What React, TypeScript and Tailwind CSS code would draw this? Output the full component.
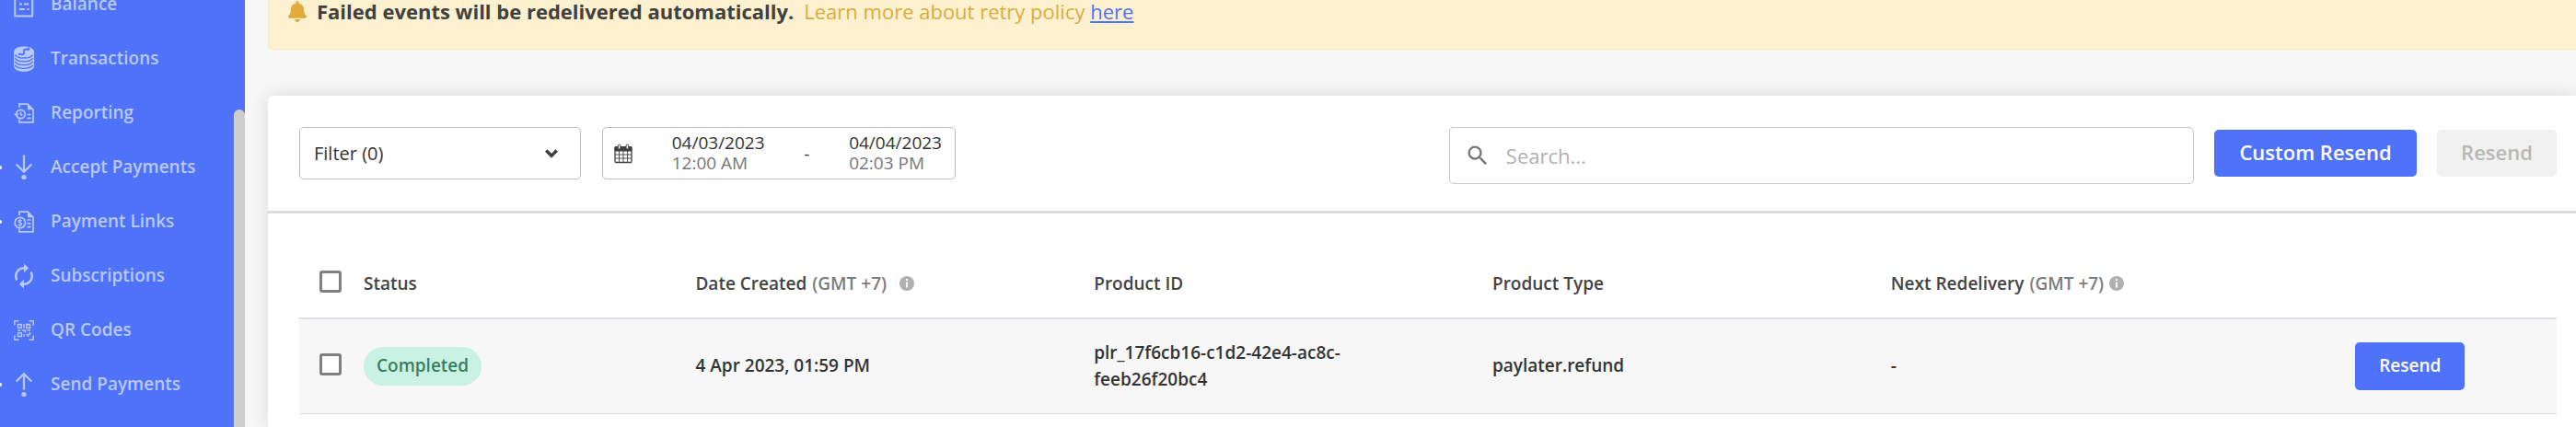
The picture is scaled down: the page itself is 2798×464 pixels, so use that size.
import type { ReactNode } from 'react';
import { FaBell } from 'react-icons/fa';
import { MdAutorenew, MdSearch } from 'react-icons/md';

interface NavItem {
  label: string;
  icon: ReactNode;
  hasSubmenu?: boolean;
}

interface WebhookEvent {
  id: string;
  status: string;
  createdAt: string;
  productId: string;
  productType: string;
  nextRedelivery: string;
}

const BalanceIcon = () => (
  <svg width="22" height="28" viewBox="0 0 22 28" fill="none" stroke="currentColor" strokeWidth="2">
    <rect x="1.2" y="1" width="19" height="25.5" />
    <path d="M6 8h10M6 13.5h3M11 13.5h5M6 19h6M14.5 19h2" />
  </svg>
);

const CoinsIcon = () => (
  <svg width="22" height="28" viewBox="0 0 22 28">
    <path
      d="M0 6.5C0 2.5 5 .5 11 .5s11 2 11 6v15c0 4-5 6.300-11 6.300s-11-2.300-11-6.300z"
      fill="currentColor"
    />
    <g fill="none" stroke="#4f73f8" strokeWidth="1.300">
      <path d="M1.200 9.300c2 3 6 3.700 9.800 3.700s7.800-.7 9.800-3.700" />
      <path d="M1.200 13.100c2 3 6 3.700 9.800 3.700s7.800-.7 9.800-3.700" />
      <path d="M1.200 16.900c2 3 6 3.700 9.800 3.700s7.800-.7 9.800-3.700" />
      <path d="M1.200 20.700c2 3 6 3.700 9.800 3.700s7.800-.7 9.800-3.700" />
      <path d="M16.500 4.300c-2.500-1.300-6-.9-5.600.9.300 1.200 1.200 3.500-1.400 4-1.500.3-2.700-.2-3.500-1M15 3l2.200-.5M5 9.200l2-.8" strokeWidth="1.900" />
    </g>
  </svg>
);

const ReportIcon = () => (
  <svg width="22" height="22" viewBox="0 0 22 22" fill="none" stroke="currentColor" strokeWidth="1.700">
    <path d="M6 4.500V1.200h9l6 5.800v13.800H6v-3.300" />
    <path d="M15 1l6.300 6.200H15z" fill="currentColor" stroke="none" />
    <circle cx="7.500" cy="12" r="4.700" />
    <path d="M7.500 9.500v2.700l2 1.300M14.500 12.500h4M14.500 16.300h4" />
    <path d="M0 11.500h5.600l-2.800 3.200z" fill="currentColor" stroke="none" />
  </svg>
);

const PaymentLinkIcon = () => (
  <svg width="22" height="24" viewBox="0 0 22 24" fill="none" stroke="currentColor" strokeWidth="1.700">
    <path d="M6 5V1.200h9l6 5.800v15.800H6v-3.300" />
    <path d="M15 1l6.300 6.200H15z" fill="currentColor" stroke="none" />
    <circle cx="6.800" cy="13" r="5.700" />
    <path d="M8.800 11c-1.200-1.200-3.800-.9-3.800.5 0 1.800 3.800 1.100 3.800 3 0 1.500-2.700 1.700-4 .5M6.900 9v8" strokeWidth="1.100" />
    <path d="M14.500 10h4M14.500 13.800h4M14.500 17.600h4" />
  </svg>
);

const QrIcon = () => (
  <svg width="22" height="22" viewBox="0 0 22 22" fill="none" stroke="currentColor" strokeWidth="1.500">
    <path d="M.8 5.500V.8h4.700M16.500.8h4.700v4.700M21.200 16.500v4.700h-4.700M5.500 21.200H.8v-4.700" />
    <rect x="4.500" y="4.500" width="3.800" height="3.800" />
    <rect x="13.700" y="4.500" width="3.800" height="3.800" />
    <rect x="4.500" y="13.700" width="3.800" height="3.800" />
    <path d="M11 4v4.500M4 11h3.500M9 11h3.500v2.500M14.500 10.800h3.500M11 15v3M13.500 15.500h2v2.500M17.500 13v3" />
  </svg>
);

const ArrowDownIcon = () => (
  <svg width="20" height="28" viewBox="0 0 20 28" fill="none" stroke="currentColor" strokeWidth="2.200">
    <path d="M10 .5v18M1.700 10.500l8.300 8.300 8.300-8.300" />
    <circle cx="10" cy="24.500" r="2.600" fill="currentColor" stroke="none" />
  </svg>
);

const ArrowUpIcon = () => (
  <svg width="20" height="28" viewBox="0 0 20 28" fill="none" stroke="currentColor" strokeWidth="2.200">
    <path d="M10 19.500V2.500M1.700 10.500L10 2.200l8.300 8.300" />
    <circle cx="10" cy="24.500" r="2.600" fill="currentColor" stroke="none" />
  </svg>
);

const CalendarIcon = () => (
  <svg width="20" height="22" viewBox="0 0 20 22" fill="none" stroke="#404040">
    <rect x="1" y="4.500" width="18" height="16" rx="1" strokeWidth="1.300" />
    <path d="M1 3.500h18V8H1z" fill="#404040" />
    <path d="M5.500 8v12.500M10 8v12.500M14.500 8v12.500M1 12h18M1 16h18" strokeWidth=".9" />
    <rect x="4.300" y="1" width="2.600" height="5" rx="1.300" fill="#fff" />
    <rect x="13.100" y="1" width="2.600" height="5" rx="1.300" fill="#fff" />
  </svg>
);

const InfoIcon = () => (
  <svg width="16" height="16" viewBox="0 0 16 16">
    <circle cx="8" cy="8" r="8" fill="#b0b0b0" />
    <path d="M8 3v2M8 6.500v6" stroke="#fff" strokeWidth="1.800" />
  </svg>
);

const navItems: NavItem[] = [
  { label: 'Balance', icon: <BalanceIcon /> },
  { label: 'Transactions', icon: <CoinsIcon /> },
  { label: 'Reporting', icon: <ReportIcon /> },
  { label: 'Accept Payments', icon: <ArrowDownIcon />, hasSubmenu: true },
  { label: 'Payment Links', icon: <PaymentLinkIcon />, hasSubmenu: true },
  { label: 'Subscriptions', icon: <MdAutorenew className="size-[30px] shrink-0" /> },
  { label: 'QR Codes', icon: <QrIcon /> },
  { label: 'Send Payments', icon: <ArrowUpIcon />, hasSubmenu: true },
];

const events: WebhookEvent[] = [
  {
    id: '1',
    status: 'Completed',
    createdAt: '4 Apr 2023, 01:59 PM',
    productId: 'plr_17f6cb16-c1d2-42e4-ac8c-feeb26f20bc4',
    productType: 'paylater.refund',
    nextRedelivery: '-',
  },
];

const Checkbox = ({ label }: { label: string }) => (
  <input
    type="checkbox"
    aria-label={label}
    className="block size-6 appearance-none rounded-[3px] border-3 border-[#808080] bg-white checked:bg-[#4f73f8]"
  />
);

const Sidebar = () => (
  <nav className="relative w-[266px] shrink-0 overflow-hidden bg-[#4f73f8]">
    <ul className="-mt-[25px]">
      {navItems.map((item) => (
        <li key={item.label} className="relative">
          {item.hasSubmenu && (
            <span className="absolute top-7 left-0 h-1 w-0.5 rounded-r-full bg-white" />
          )}
          <a
            href="#"
            className="flex h-[59px] items-center gap-[17px] pl-[14px] text-[19px] font-semibold text-[#b9c8fd]"
          >
            <span className="flex w-6 shrink-0 justify-center">{item.icon}</span>
            {item.label}
          </a>
        </li>
      ))}
    </ul>
    {/* Scrollbar thumb */}
    <div className="absolute top-[119px] right-0 bottom-0 w-3 rounded-t-full bg-[#cecece]" />
  </nav>
);

const Toolbar = () => (
  <div className="flex items-start border-b-3 border-[#dcdcdc] pt-[34px] pr-[21px] pb-[29px] pl-[34px]">
    <button
      type="button"
      className="flex h-[57px] w-[306px] items-center justify-between rounded-[5px] border border-[#bdbdbd] pr-6 pl-[15px] text-[20px] text-[#333]"
    >
      Filter (0)
      <svg width="14" height="10" viewBox="0 0 14 10" fill="none" stroke="#404040" strokeWidth="3.400">
        <path d="M1.200 1.500L7 7.300l5.800-5.800" />
      </svg>
    </button>
    <button
      type="button"
      className="ml-[23px] flex h-[57px] w-[384px] items-center justify-between rounded-[5px] border border-[#bdbdbd] pr-[14px] pl-3 text-left text-[19px] leading-[22px] text-[#333]"
    >
      <CalendarIcon />
      <span className="pb-0.5">
        04/03/2023
        <span className="block text-[#777]">12:00 AM</span>
      </span>
      <span>-</span>
      <span className="pb-0.5">
        04/04/2023
        <span className="block text-[#777]">02:03 PM</span>
      </span>
    </button>
    <label className="ml-auto flex h-[62px] w-[33%] items-center gap-[17px] rounded-[5px] border border-[#c8c8c8] pl-4">
      <MdSearch className="size-7 shrink-0 text-[#757575]" />
      <input
        type="search"
        aria-label="Search"
        placeholder="Search..."
        className="w-full text-[22px] text-[#333] outline-none placeholder:text-[#b0b0b0]"
      />
    </label>
    <div className="ml-[22px] flex h-[57px] items-center gap-[22px]">
      <button
        type="button"
        className="h-[51px] w-[220px] rounded-[5px] bg-[#4f73f8] pb-0.5 text-[22px] font-semibold text-white"
      >
        Custom Resend
      </button>
      <button
        type="button"
        disabled
        className="h-[51px] w-[130px] rounded-[5px] bg-[#f1f1f1] pb-0.5 text-[22px] font-semibold text-[#b8b8b8]"
      >
        Resend
      </button>
    </div>
  </div>
);

const EventsTable = () => (
  <div className="pt-[39px] pr-[21px] pl-[34px]">
    <table className="w-full table-fixed border-collapse text-left text-[19px] leading-[29px] font-semibold">
      <colgroup>
        <col className="w-[70px]" />
        <col className="w-[14.7%]" />
        <col className="w-[17.65%]" />
        <col className="w-[17.65%]" />
        <col className="w-[17.65%]" />
        <col className="w-[17.65%]" />
        <col />
      </colgroup>
      <thead>
        <tr className="h-[75px] border-b-2 border-[#dee2e6] text-[#444]">
          <th className="pb-1 pl-[22px]">
            <Checkbox label="Select all events" />
          </th>
          <th className="font-semibold">Status</th>
          <th className="font-semibold">
            <span className="flex items-center">
              Date Created
              <span className="mr-[14px] ml-[6px] text-[#7b7b7b]">(GMT +7)</span>
              <InfoIcon />
            </span>
          </th>
          <th className="font-semibold">Product ID</th>
          <th className="font-semibold">Product Type</th>
          <th className="font-semibold">
            <span className="flex items-center">
              Next Redelivery
              <span className="mx-[6px] text-[#7b7b7b]">(GMT +7)</span>
              <InfoIcon />
            </span>
          </th>
          <th aria-label="Actions" />
        </tr>
      </thead>
      <tbody>
        {events.map((event) => (
          <tr key={event.id} className="h-[103px] border-b border-[#dcdcdc] bg-[#f7f7f7] text-[#333]">
            <td className="pb-1 pl-[22px]">
              <Checkbox label={`Select ${event.productId}`} />
            </td>
            <td>
              <span className="inline-flex h-[42px] items-center rounded-full bg-[#c9f2e5] px-[14px] text-[#3a7d61]">
                {event.status}
              </span>
            </td>
            <td>{event.createdAt}</td>
            <td className="pr-20">{event.productId}</td>
            <td>{event.productType}</td>
            <td>{event.nextRedelivery}</td>
            <td className="pr-7 text-center">
              <button
                type="button"
                className="h-[52px] w-[119px] rounded-[5px] bg-[#4f73f8] text-white"
              >
                Resend
              </button>
            </td>
          </tr>
        ))}
      </tbody>
    </table>
  </div>
);

export default function App() {
  return (
    <div className="flex min-h-screen bg-[#f7f7f7] font-['Open_Sans',sans-serif]">
      <Sidebar />
      <main className="flex min-w-0 flex-1 flex-col gap-[50px] overflow-hidden pl-[25px]">
        {/* Retry notice */}
        <div className="flex items-center gap-[11px] rounded-bl-[6px] border-b border-l border-[#fcebb5] bg-[#fdf1cf] pb-[29px] pl-[21px] text-[22px] leading-6">
          <FaBell className="h-[23px] w-5 text-[#deab3c]" />
          <strong className="text-[#404040]">Failed events will be redelivered automatically.</strong>
          <p className="text-[#deab3c]">
            Learn more about retry policy{' '}
            <a href="#" className="text-[#4f73f8] underline">
              here
            </a>
          </p>
        </div>
        <section className="flex-1 rounded-tl-[6px] bg-white shadow-[0_0_20px_rgba(0,0,0,0.12)]">
          <Toolbar />
          <EventsTable />
        </section>
      </main>
    </div>
  );
}
